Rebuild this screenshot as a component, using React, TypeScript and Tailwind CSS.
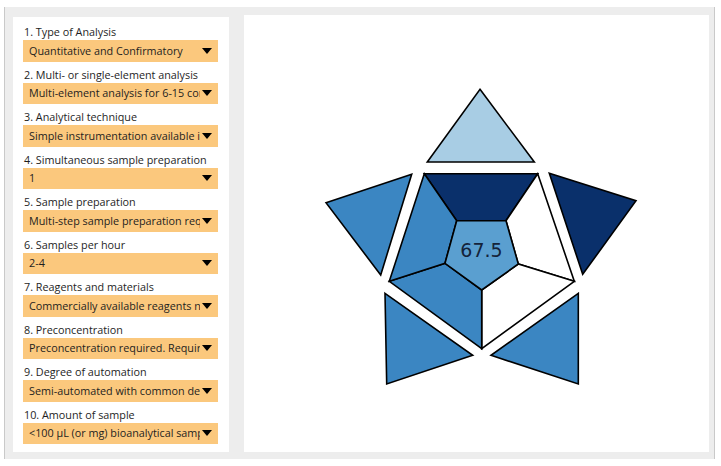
import React from "react";

type Field = { label: string; value: string };

const fields: Field[] = [
  { label: "1. Type of Analysis", value: "Quantitative and Confirmatory" },
  { label: "2. Multi- or single-element analysis", value: "Multi-element analysis for 6-15 compounds" },
  { label: "3. Analytical technique", value: "Simple instrumentation available in most laboratories" },
  { label: "4. Simultaneous sample preparation", value: "1" },
  { label: "5. Sample preparation", value: "Multi-step sample preparation required" },
  { label: "6. Samples per hour", value: "2-4" },
  { label: "7. Reagents and materials", value: "Commercially available reagents needed" },
  { label: "8. Preconcentration", value: "Preconcentration required. Requires extra steps" },
  { label: "9. Degree of automation", value: "Semi-automated with common devices" },
  { label: "10. Amount of sample", value: "<100 µL (or mg) bioanalytical samples" },
];

const NAVY = "#0a306b";
const MID = "#3b86c2";
const LIGHT = "#a8cde4";
const CENTER = "#5a9fd0";

function Dropdown({ value }: { value: string }) {
  return (
    <div className="flex h-[21.5px] w-[195px] items-center bg-[#fbc87d] pl-[6px] pr-[6px]">
      <div className="flex-1 overflow-hidden whitespace-nowrap text-[#1e1e1e]">{value}</div>
      <svg width="10" height="6" viewBox="0 0 10 6" className="ml-[2px] shrink-0">
        <polygon points="0,0 10,0 5,6" fill="#000" />
      </svg>
    </div>
  );
}

function Poly({ pts, fill }: { pts: number[][]; fill: string }) {
  return (
    <polygon
      points={pts.map((p) => p.join(",")).join(" ")}
      fill={fill}
      stroke="#000"
      strokeWidth={1.6}
      strokeLinejoin="miter"
    />
  );
}

function Star() {
  // outer pentagon
  const oTL = [424.3, 173.7];
  const oTR = [537.7, 173.7];
  const oR = [574.3, 281.3];
  const oB = [481.7, 348.7];
  const oL = [389.3, 281.3];
  // inner pentagon
  const iTL = [456.7, 220.7];
  const iTR = [506, 220.7];
  const iR = [518.3, 264];
  const iB = [481.7, 290];
  const iL = [445, 263.3];

  return (
    <svg viewBox="244 15 465 437" className="h-full w-full">
      {/* outer triangles */}
      <Poly pts={[[480, 89.3], [534.3, 162], [427.3, 162]]} fill={LIGHT} />
      <Poly pts={[[326, 202.7], [411.7, 174.3], [380.7, 275]]} fill={MID} />
      <Poly pts={[[549.3, 173.3], [636, 200.7], [582.7, 274.3]]} fill={NAVY} />
      <Poly pts={[[385, 293.3], [472.7, 355.3], [386.7, 384]]} fill={MID} />
      <Poly pts={[[578.3, 293.3], [491, 355.3], [578.3, 384]]} fill={MID} />
      {/* pentagon segments */}
      <Poly pts={[oTL, oTR, iTR, iTL]} fill={NAVY} />
      <Poly pts={[oTR, oR, iR, iTR]} fill="#ffffff" />
      <Poly pts={[oR, oB, iB, iR]} fill="#ffffff" />
      <Poly pts={[oB, oL, iL, iB]} fill={MID} />
      <Poly pts={[oL, oTL, iTL, iL]} fill={MID} />
      <Poly pts={[iTL, iTR, iR, iB, iL]} fill={CENTER} />
      <text
        x={481.5}
        y={257}
        textAnchor="middle"
        fontFamily="'DejaVu Sans', sans-serif"
        fontSize={19}
        fill="#14233a"
      >
        67.5
      </text>
    </svg>
  );
}

export default function App() {
  return (
    <div className="h-[466px] w-[721px] bg-white" style={{ fontFamily: "'Open Sans', sans-serif" }}>
      <div className="ml-[4px] flex h-[452px] w-[711px] translate-y-[7px] items-start border-l border-r border-[#c9c9c9] bg-[#ededed] pl-[8px]">
        <div className="mt-[10px] flex h-[435px] w-[216px] flex-col gap-[5px] bg-white px-[10px] pt-[7px] text-[10.8px]">
          {fields.map((f) => (
            <div key={f.label} className="flex flex-col">
              <div className="h-[16px] whitespace-nowrap pl-[1px] leading-[16px] text-[#1e1e1e]">{f.label}</div>
              <Dropdown value={f.value} />
            </div>
          ))}
        </div>
        <div className="ml-[15px] mt-[8px] h-[437px] w-[465px] bg-white">
          <Star />
        </div>
      </div>
    </div>
  );
}
